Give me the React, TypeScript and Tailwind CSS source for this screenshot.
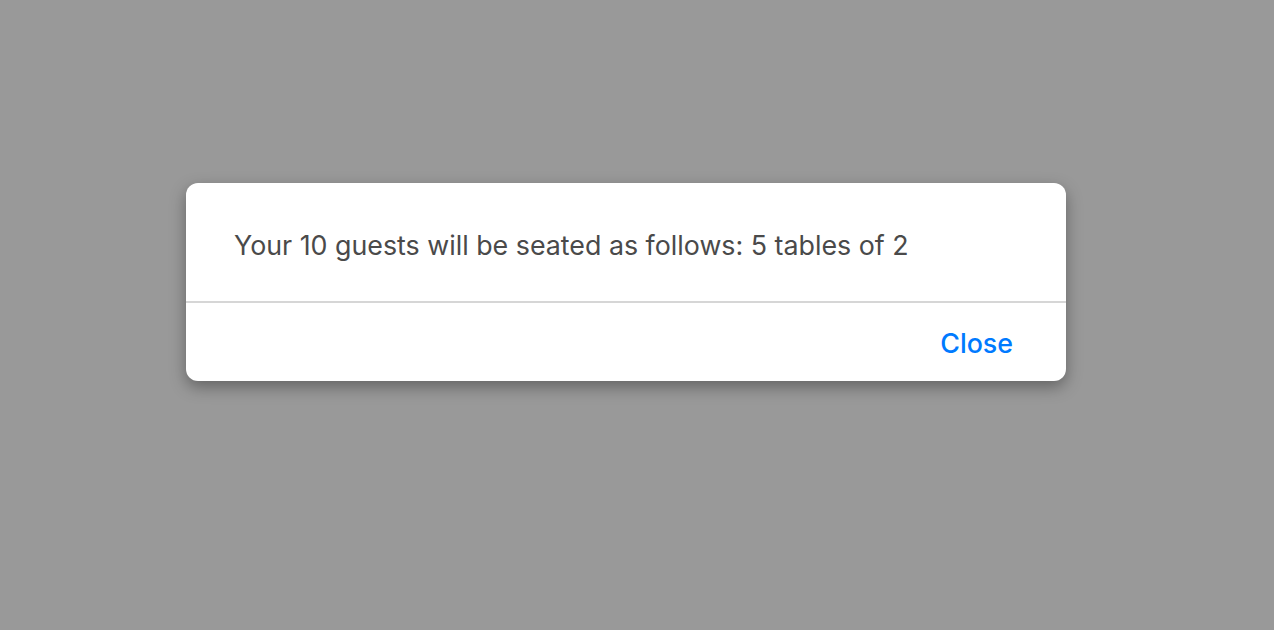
export default function App() {
  return (
    <div className="h-[630px] w-full bg-[#999999] pl-[186px] pt-[183px] font-['Inter',sans-serif]">
      <div className="w-[880px] overflow-hidden rounded-[12px] bg-white shadow-[0_6px_16px_rgba(0,0,0,0.35)]">
        <div className="flex h-[118px] items-center px-[48px] pt-[6px]">
          <p className="text-[26.8px] leading-none text-[#4a4a4a]">
            Your 10 guests will be seated as follows: 5 tables of 2
          </p>
        </div>
        <div className="h-[2px] bg-[#d6d6d6]" />
        <div className="flex h-[78px] items-center justify-end pr-[53px] pt-[2px]">
          <button className="text-[26.8px] font-medium leading-none text-[#007aff]">Close</button>
        </div>
      </div>
    </div>
  );
}
